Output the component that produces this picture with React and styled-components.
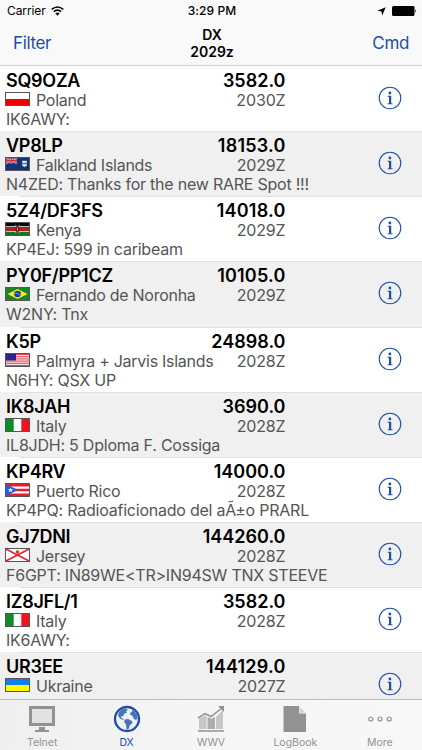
import React from "react";
import styled, { createGlobalStyle } from "styled-components";

const BLUE = "#1d4ea6";
const GREY = "#929292";

const GlobalStyle = createGlobalStyle`
  * {
    box-sizing: border-box;
  }

  body {
    margin: 0;
    font-family: Inter, "Liberation Sans", sans-serif;
    background-color: #fff;
    color: #000;
  }
`;

const Screen = styled.div`
  display: flex;
  flex-direction: column;
  width: 422px;
  height: 750px;
  overflow: hidden;
`;

const Header = styled.header`
  flex: 0 0 66px;
  border-bottom: 1px solid #d2d2d3;
  background-color: #f9f9f9;
`;

const StatusBar = styled.div`
  display: grid;
  grid-template-columns: 1fr auto 1fr;
  align-items: center;
  height: 22px;
  padding: 0 5px 0 7px;
  font-size: 12px;
  line-height: 22px;
`;

const Carrier = styled.div`
  display: flex;
  align-items: center;
  gap: 5px;
  letter-spacing: -0.1px;
`;

const Clock = styled.div`
  font-weight: 500;
  letter-spacing: 0.1px;
`;

const StatusIcons = styled.div`
  display: flex;
  align-items: center;
  justify-content: flex-end;
  gap: 6px;
`;

const NavBar = styled.nav`
  display: grid;
  grid-template-columns: 1fr auto 1fr;
  align-items: center;
  height: 42px;
  padding: 0 13px;
`;

const NavButton = styled.button`
  justify-self: ${(props) => props.$side};
  padding: 0;
  border: 0;
  background: none;
  color: ${BLUE};
  font: 17px/20px Inter, sans-serif;
  letter-spacing: -0.35px;
`;

const Title = styled.h1`
  margin: 0;
  padding-left: 2px;
  font-size: 14px;
  font-weight: 600;
  line-height: 17px;
  text-align: center;
`;

const List = styled.main`
  flex: 1;
  min-height: 0;
  overflow: hidden;
`;

const Row = styled.div`
  display: grid;
  grid-template-columns: 1fr auto;
  height: 65.15px;
  padding: 5px 20px 0 6px;
  background-color: ${(props) => (props.$shaded ? "#f0f0f0" : "#fff")};
  background-image: linear-gradient(#dfdfe0, #dfdfe0);
  background-repeat: no-repeat;
  background-size: 100% 1px;
  background-position: ${(props) => (props.$first ? "0 -2px" : "20px 0")};
`;

const Spot = styled.div`
  min-width: 0;
  white-space: nowrap;
`;

const Line = styled.div`
  display: flex;
  align-items: center;
  justify-content: space-between;
  width: 279.5px;
  height: ${(props) => props.$height}px;
`;

const Strong = styled.span`
  font-size: 18px;
  font-weight: 600;
  line-height: 19px;
  letter-spacing: ${(props) => props.$tracking || 0}px;
`;

const Country = styled.span`
  display: flex;
  align-items: center;
  gap: 6px;
`;

const Muted = styled.span`
  color: #555;
  font-size: 16px;
  line-height: 20px;
  letter-spacing: ${(props) => props.$tracking}px;
`;

const Comment = styled.div`
  color: #555;
  font-size: 16px;
  line-height: 19px;
  letter-spacing: ${(props) => props.$tracking}px;
`;

const FlagFrame = styled.svg`
  display: block;
  width: 25px;
  height: 14px;
  margin: 0 0 2px -1px;
  border: 1px solid #555;
`;

const InfoButton = styled.button`
  align-self: start;
  height: 24px;
  margin-top: 15px;
  padding: 0;
  border: 0;
  background: none;

  svg {
    display: block;
  }
`;

const TabBar = styled.footer`
  display: grid;
  grid-template-columns: repeat(5, 1fr);
  flex: 0 0 51px;
  border-top: 1px solid #bdbdbe;
  background: linear-gradient(100deg, #efeff0, #f5f5f5 45%, #f8f8f8);
`;

const Tab = styled.div`
  display: flex;
  flex-direction: column;
  align-items: center;
  padding-top: 5px;
  color: ${(props) => (props.$active ? BLUE : GREY)};
  font-size: 10.5px;
  line-height: 14px;

  svg {
    display: block;
    margin-bottom: 3px;
  }
`;

const flags = {
  pl: (
    <>
      <path fill="#fff" d="M0 0h23v13H0z" />
      <path fill="#f40000" d="M0 6.5h23V13H0z" />
    </>
  ),
  fk: (
    <>
      <path fill="#153277" d="M0 0h23v13H0z" />
      <path stroke="#c9cfe0" strokeWidth="1.6" d="M0 0l11 6M11 0L0 6" />
      <path stroke="#d22c42" strokeWidth=".8" d="M0 0l11 6M11 0L0 6" />
      <path stroke="#e6dfe8" strokeWidth="2.2" d="M5.5 0v6M0 3h11" />
      <path stroke="#d22c42" strokeWidth="1.4" d="M5.5 0v6M0 3h11" />
      <path fill="#a9bfcf" d="M16 3h5v5l-2.500 2L16 8z" />
      <path stroke="#fff" d="M17 4h3M17 8h3" />
      <path stroke="#4e8199" d="M16 6h5" />
    </>
  ),
  ke: (
    <>
      <path fill="#080808" d="M0 0h23v4H0z" />
      <path fill="#ddd" d="M0 3.500h23v6H0z" />
      <path fill="#a52424" d="M0 4.300h23v4.400H0z" />
      <path fill="#177324" d="M0 9.500h23V13H0z" />
      <path stroke="#ddd" strokeWidth=".7" d="M9.500 2l4 9M13.500 2l-4 9" />
      <ellipse cx="11.500" cy="6.500" rx="1.800" ry="3.600" fill="#961717" />
      <path stroke="#111" strokeWidth=".7" d="M10 5v3M13 5v3" />
      <path stroke="#eee" strokeWidth=".7" d="M11.500 5v3" />
    </>
  ),
  br: (
    <>
      <path fill="#19852a" d="M0 0h23v13H0z" />
      <path fill="#f7ed16" d="M1.500 6.500l10-5.500 10 5.500-10 5.500z" />
      <circle cx="11.500" cy="6.500" r="3.400" fill="#1c3cae" />
      <path fill="none" stroke="#a9c8ec" strokeWidth=".7" d="M8.500 5.600q3.500-.4 6 2.200" />
    </>
  ),
  us: (
    <>
      <path fill="#fff" d="M0 0h23v13H0z" />
      <path stroke="#e03b48" d="M0 .5h23M0 2.500h23M0 4.500h23M0 6.500h23M0 8.500h23M0 10.500h23M0 12.500h23" />
      <path fill="#201c80" d="M0 0h10v7H0z" />
      <path stroke="#7c79bb" strokeWidth=".7" strokeDasharray=".7 1.200" d="M1 1.500h8M1.500 3.500h8M1 5.500h8" />
    </>
  ),
  it: (
    <>
      <path fill="#fff" d="M0 0h23v13H0z" />
      <path fill="#128a28" d="M0 0h7.700v13H0z" />
      <path fill="#f3121b" d="M15.300 0H23v13h-7.700z" />
    </>
  ),
  pr: (
    <>
      <path fill="#fff" d="M0 0h23v13H0z" />
      <path stroke="#ed1c2b" strokeWidth="2.600" d="M0 1.300h23M0 6.500h23M0 11.700h23" />
      <path fill="#1f63e0" d="M0 0l12 6.500L0 13z" />
      <path fill="#fff" d="M4.500 4l.7 1.800h1.900L5.600 7l.6 2-1.700-1.200L2.800 9l.6-2-1.500-1.200h1.900z" />
    </>
  ),
  je: (
    <>
      <path fill="#fff" d="M0 0h23v13H0z" />
      <path stroke="#e8212e" strokeWidth="1.700" d="M0 0l23 13M23 0L0 13" />
      <path fill="#d33c25" d="M10 1.800h3v2l-1.500 1.500L10 3.800z" />
      <path stroke="#e9a52c" d="M10 1.500h3" />
    </>
  ),
  ua: (
    <>
      <path fill="#1080ee" d="M0 0h23v6.500H0z" />
      <path fill="#fff600" d="M0 6.500h23V13H0z" />
    </>
  ),
};

const spots = [
  { call: "SQ9OZA", freq: "3582.0", flag: "pl", country: "Poland", time: "2030Z", comment: "IK6AWY:" },
  { call: "VP8LP", freq: "18153.0", flag: "fk", country: "Falkland Islands", time: "2029Z", comment: "N4ZED: Thanks for the new RARE Spot !!!" },
  { call: "5Z4/DF3FS", freq: "14018.0", flag: "ke", country: "Kenya", time: "2029Z", comment: "KP4EJ: 599 in caribeam" },
  { call: "PY0F/PP1CZ", freq: "10105.0", flag: "br", country: "Fernando de Noronha", time: "2029Z", comment: "W2NY: Tnx" },
  { call: "K5P", freq: "24898.0", flag: "us", country: "Palmyra + Jarvis Islands", time: "2028Z", comment: "N6HY: QSX UP" },
  { call: "IK8JAH", freq: "3690.0", flag: "it", country: "Italy", time: "2028Z", comment: "IL8JDH: 5 Dploma F. Cossiga" },
  { call: "KP4RV", freq: "14000.0", flag: "pr", country: "Puerto Rico", time: "2028Z", comment: "KP4PQ: Radioaficionado del aÃ±o PRARL" },
  { call: "GJ7DNI", freq: "144260.0", flag: "je", country: "Jersey", time: "2028Z", comment: "F6GPT: IN89WE<TR>IN94SW TNX STEEVE" },
  { call: "IZ8JFL/1", freq: "3582.0", flag: "it", country: "Italy", time: "2028Z", comment: "IK6AWY:" },
  { call: "UR3EE", freq: "144129.0", flag: "ua", country: "Ukraine", time: "2027Z", comment: "OE3K: INTERN. TMT: UU2CC C 20" },
];

// a "1" sets narrow, so open up the frequencies that hold two of them
const freqTracking = (freq) => (freq.split("1").length > 2 ? 0.2 : 0);

const Flag = ({ code }) => (
  <FlagFrame viewBox="0 0 23 13" fill="none" preserveAspectRatio="none">
    {flags[code]}
  </FlagFrame>
);

const InfoIcon = () => (
  <svg width="24" height="24" viewBox="0 0 24 24" fill="none">
    <circle cx="12" cy="12" r="10.8" stroke={BLUE} strokeWidth="1.1" />
    <circle cx="11.900" cy="7" r="1.400" fill={BLUE} />
    <path fill={BLUE} d="M9.600 9.700h3.600v7.500l1.400.3v.8H9.600v-.8l1.400-.3v-6.300l-1.400-.3z" />
  </svg>
);

const WifiIcon = () => (
  <svg width="13" height="10" viewBox="0 0 13 10" fill="none" stroke="#000" strokeWidth="1.600">
    <path d="M.7 3.400Q6.500-1.400 12.300 3.400" />
    <path d="M2.800 5.700Q6.500 2.700 10.200 5.700" />
    <path fill="#000" stroke="none" d="M4.300 7.300Q6.500 5.600 8.700 7.300L6.500 9.700z" />
  </svg>
);

const TelnetIcon = () => (
  <svg width="28" height="28" viewBox="0 0 28 28">
    <path fill={GREY} fillRule="evenodd" d="M1 1h26v20H1zM4 4v14h20V4z" />
    <path fill="#e2e2e3" d="M4 4h20v14H4z" />
    <path fill={GREY} d="M11 22h6v3h-6zM7 25h14v2H7z" />
  </svg>
);

const GlobeIcon = () => (
  <svg width="28" height="28" viewBox="0 0 28 28">
    <circle cx="14" cy="14" r="12" fill="#edf1f6" stroke={BLUE} strokeWidth="2.300" />
    <path
      fill="#4a73b6"
      d="M6 7l3-3 4-.5 2 1.500-2 1 1 1.500-3 1.500-1 2.500-2-.5.5 2 2.500 1.500-1 .5-3-1.500-2-3zM12 14.500l3-.5 4 2 .5 2-2.500 2-1.500 4-2 .5-.5-5-2-3zM18.500 5l2.500.5 3 4 .5 4-1.500 1.500-2-1-1.500-3-2.500-1.500.5-2 2-1z"
    />
  </svg>
);

const ChartIcon = () => (
  <svg width="28" height="28" viewBox="0 0 28 28" fill="none">
    <path fill="#c6c6c6" d="M2 14l6-3.500 1.500.7V24H2zM19 12l7-7v19h-7z" />
    <path fill="#adadad" d="M10.500 12l4 1.800 3.500-2V24h-7.500z" />
    <path stroke={GREY} strokeWidth="1.500" d="M1 13l7-4.500 6 3L25 3M1 26h26" />
    <path fill={GREY} d="M21 1h6v6z" />
  </svg>
);

const LogIcon = () => (
  <svg width="28" height="28" viewBox="0 0 28 28">
    <path fill={GREY} d="M2.500 1H18v7.500h7V27H2.500z" />
    <path fill="#d2d2d2" d="M18.500 1.500L24.500 8h-6z" />
  </svg>
);

const MoreIcon = () => (
  <svg width="28" height="28" viewBox="0 0 28 28" fill="none" stroke={GREY} strokeWidth="1.200">
    <circle cx="4.800" cy="14" r="2" />
    <circle cx="14" cy="14" r="2" />
    <circle cx="23.200" cy="14" r="2" />
  </svg>
);

const tabs = [
  { label: "Telnet", Icon: TelnetIcon },
  { label: "DX", Icon: GlobeIcon, active: true },
  { label: "WWV", Icon: ChartIcon },
  { label: "LogBook", Icon: LogIcon },
  { label: "More", Icon: MoreIcon },
];

const App = () => {
  return (
    <Screen>
      <GlobalStyle />
      <Header>
        <StatusBar>
          <Carrier>
            Carrier
            <WifiIcon />
          </Carrier>
          <Clock>3:29 PM</Clock>
          <StatusIcons>
            <svg width="9" height="9" viewBox="0 0 9 9">
              <path d="M8.700.3L5.200 8.500 4.500 4.500.5 3.800z" />
            </svg>
            <svg width="25" height="10" viewBox="0 0 25 10">
              <rect width="22.500" height="10" rx="1.500" />
              <path d="M23.300 3.300q1.700 1.700 0 3.400z" />
            </svg>
          </StatusIcons>
        </StatusBar>
        <NavBar>
          <NavButton $side="start">Filter</NavButton>
          <Title>
            DX
            <br />
            2029z
          </Title>
          <NavButton $side="end">Cmd</NavButton>
        </NavBar>
      </Header>
      <List>
        {spots.map((spot, i) => (
          <Row key={i} $shaded={i % 2 === 1} $first={i === 0}>
            <Spot>
              <Line $height={19}>
                <Strong $tracking={-0.27}>{spot.call}</Strong>
                <Strong $tracking={freqTracking(spot.freq)}>{spot.freq}</Strong>
              </Line>
              <Line $height={20}>
                <Country>
                  <Flag code={spot.flag} />
                  <Muted $tracking={-0.27}>{spot.country}</Muted>
                </Country>
                <Muted $tracking={-0.15}>{spot.time}</Muted>
              </Line>
              <Comment $tracking={-0.23}>{spot.comment}</Comment>
            </Spot>
            <InfoButton>
              <InfoIcon />
            </InfoButton>
          </Row>
        ))}
      </List>
      <TabBar>
        {tabs.map(({ label, Icon, active }) => (
          <Tab key={label} $active={active}>
            <Icon />
            {label}
          </Tab>
        ))}
      </TabBar>
    </Screen>
  );
};

export default App;
